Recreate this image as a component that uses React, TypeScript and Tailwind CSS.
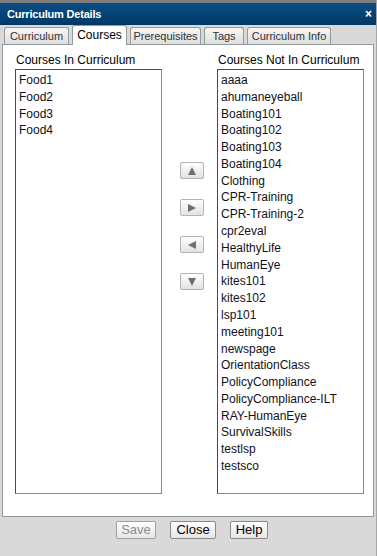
import { useState } from "react";

const inCurriculum = ["Food1", "Food2", "Food3", "Food4"];

const notInCurriculum = [
  "aaaa",
  "ahumaneyeball",
  "Boating101",
  "Boating102",
  "Boating103",
  "Boating104",
  "Clothing",
  "CPR-Training",
  "CPR-Training-2",
  "cpr2eval",
  "HealthyLife",
  "HumanEye",
  "kites101",
  "kites102",
  "lsp101",
  "meeting101",
  "newspage",
  "OrientationClass",
  "PolicyCompliance",
  "PolicyCompliance-ILT",
  "RAY-HumanEye",
  "SurvivalSkills",
  "testlsp",
  "testsco",
];

// tab widths taken from the original dialog
const tabs = [
  { name: "Curriculum", w: "w-[65px]" },
  { name: "Courses", w: "w-[55px]" },
  { name: "Prerequisites", w: "w-[71px]" },
  { name: "Tags", w: "w-[40px]" },
  { name: "Curriculum Info", w: "w-[84px]" },
];

function Arrow({ dir }: { dir: "up" | "right" | "left" | "down" }) {
  const points = {
    up: "5,1 9,9 1,9",
    down: "1,1 9,1 5,9",
    right: "1,1 9,5 1,9",
    left: "9,1 9,9 1,5",
  }[dir];
  return (
    <button className="w-[24px] h-[17px] flex items-center justify-center border border-[#b4b4b4] rounded-[2px] bg-gradient-to-b from-white to-[#e2e2e2]">
      <svg width="10" height="10" viewBox="0 0 10 10">
        <polygon points={points} fill="#6f6f6f" />
      </svg>
    </button>
  );
}

function ListBox({ label, items }: { label: string; items: string[] }) {
  return (
    <div className="w-[147px] flex flex-col">
      <div className="h-[17px] pl-[1px] text-[12px] leading-[17px] text-black">{label}</div>
      <ul className="h-[425px] border border-t-[#4a4a4a] border-l-[#4a4a4a] border-r-[#8a8a8a] border-b-[#8a8a8a] bg-white pl-[3px] pt-[2px] overflow-hidden">
        {items.map(item => (
          <li key={item} className="text-[12px] leading-[16.78px] text-[#111122] whitespace-nowrap">
            {item}
          </li>
        ))}
      </ul>
    </div>
  );
}

export default function App() {
  const [active, setActive] = useState("Courses");

  return (
    <div
      className="w-[377px] h-[556px] bg-[#d9d9d9] border-r border-[#a8a8a8] flex flex-col"
      style={{ fontFamily: '"Liberation Sans", Arial, sans-serif' }}
    >
      <div className="h-[3px] bg-[#7d7d7d]" />
      <div className="h-[22px] bg-gradient-to-b from-[#0b4e86] to-[#003865] flex items-center justify-between pl-[7px] pr-[4px]">
        <span className="text-white font-bold text-[11px] tracking-[-0.2px]">Curriculum Details</span>
        <span className="text-white font-bold text-[12px] leading-none">×</span>
      </div>

      <div className="h-[19px] flex items-end pl-[4px] gap-[3px]">
        {tabs.map(tab =>
          tab.name === active ? (
            <button
              key={tab.name}
              onClick={() => setActive(tab.name)}
              className={`${tab.w} relative z-10 h-[20px] -mb-[1px] bg-white border border-b-0 border-[#919b9c] rounded-t-[3px] text-[12px] leading-[19px] text-black whitespace-nowrap`}
            >
              {tab.name}
            </button>
          ) : (
            <button
              key={tab.name}
              onClick={() => setActive(tab.name)}
              className={`${tab.w} h-[17px] bg-gradient-to-b from-[#f6f6f6] to-[#dedede] border border-b-0 border-[#919b9c] rounded-t-[3px] text-[11px] leading-[16px] text-[#333] whitespace-nowrap`}
            >
              {tab.name}
            </button>
          )
        )}
      </div>

      <div className="ml-[2px] w-[372px] h-[473px] bg-white border border-[#919b9c] flex pl-[12px] pt-[7px]">
        <ListBox label="Courses In Curriculum" items={inCurriculum} />
        <div className="ml-[18px] mr-[13px] pt-[110px] flex flex-col gap-[20px]">
          <Arrow dir="up" />
          <Arrow dir="right" />
          <Arrow dir="left" />
          <Arrow dir="down" />
        </div>
        <ListBox label="Courses Not In Curriculum" items={notInCurriculum} />
      </div>

      <div className="flex pl-[116px] pt-[4px] gap-[14px]">
        <button className="h-[18px] w-[40px] border border-[#a0a0a0] rounded-[2px] bg-gradient-to-b from-white to-[#e6e6e6] text-[13px] leading-[16px] text-[#8c8c8c]">
          Save
        </button>
        <button className="h-[18px] w-[46px] border border-[#8a8a8a] rounded-[2px] bg-gradient-to-b from-white to-[#e6e6e6] text-[13px] leading-[16px] text-black">
          Close
        </button>
        <button className="h-[18px] w-[38px] border border-[#8a8a8a] rounded-[2px] bg-gradient-to-b from-white to-[#e6e6e6] text-[13px] leading-[16px] text-black">
          Help
        </button>
      </div>
    </div>
  );
}
